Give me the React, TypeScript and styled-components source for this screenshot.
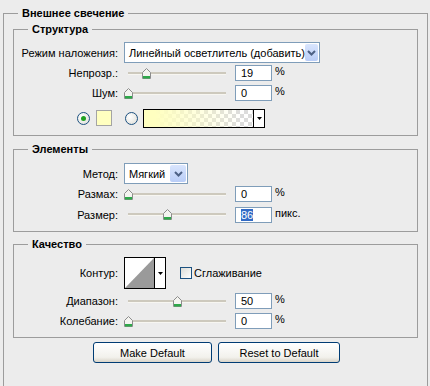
import styled, { createGlobalStyle } from 'styled-components';

const GlobalStyle = createGlobalStyle`
  body {
    margin: 0;
    background: #ececec;
    font-family: "Liberation Sans", Arial, sans-serif;
    font-size: 11px;
    color: #000;
  }
`;

const Page = styled.div`
  height: 386px;
  box-sizing: border-box;
  overflow: hidden;
  padding: 6px 2px 0 3px;
`;

const Group = styled.fieldset<{ $mt?: number }>`
  margin: ${p => p.$mt ?? 0}px 0 0;
  padding: 0;
  border: 1px solid #9c9c9c;
  min-width: 0;
`;

const Legend = styled.legend`
  margin-left: 14px;
  padding: 0 4px;
  font-weight: bold;
  line-height: 14px;
  height: 14px;
`;

const Body = styled.div<{ $pt: number; $pb: number; $px?: number }>`
  padding: ${p => p.$pt}px ${p => p.$px ?? 0}px ${p => p.$pb}px;
`;

const Row = styled.div<{ $h: number; $mt?: number }>`
  display: grid;
  grid-template-columns: 104px 1fr;
  column-gap: 6px;
  align-items: center;
  height: ${p => p.$h}px;
  margin-top: ${p => p.$mt ?? 0}px;
`;

const Label = styled.div`
  text-align: right;
  white-space: nowrap;
`;

const Controls = styled.div`
  display: flex;
  align-items: center;
`;

const Select = styled.div<{ $w: number }>`
  width: ${p => p.$w}px;
  height: 21px;
  box-sizing: border-box;
  border: 1px solid #7f9db9;
  background: #fff;
  display: flex;
  align-items: center;
  justify-content: space-between;
  padding-left: 4px;
  white-space: nowrap;
`;

const SelectButton = styled.div`
  width: 16px;
  height: 17px;
  margin-right: 1px;
  border-radius: 2px;
  background: linear-gradient(#d9e5fd, #b9cdf7);
  display: flex;
  align-items: center;
  justify-content: center;
`;

const Slider = styled.div`
  position: relative;
  width: 105px;
  height: 11px;
  display: flex;
  align-items: center;
`;

const Track = styled.div`
  margin-left: 4px;
  width: 98px;
  height: 2px;
  background: #cdc9bd;
  border-bottom: 1px solid #f7f6f1;
`;

const Thumb = styled.svg`
  position: absolute;
  top: 0;
`;

const Numeric = styled.div`
  width: 37px;
  height: 16px;
  box-sizing: border-box;
  border: 1px solid #7f9db9;
  background: #fff;
  padding-left: 5px;
  line-height: 14px;
  margin-left: 6px;
`;

const Selected = styled.span`
  background: #316ac5;
  color: #fff;
`;

const Unit = styled.span`
  margin-left: 3px;
  align-self: flex-start;
  line-height: 12px;
`;

const ColorRow = styled.div`
  display: flex;
  align-items: center;
  height: 20px;
  margin-top: 5px;
  padding-left: 63px;
`;

const Radio = styled.div<{ $on?: boolean }>`
  width: 13px;
  height: 13px;
  box-sizing: border-box;
  border-radius: 50%;
  border: 1px solid #1c5180;
  background: radial-gradient(circle at 35% 35%, #fff, #dcdcd5);
  display: flex;
  align-items: center;
  justify-content: center;
  margin-right: ${p => (p.$on ? 6 : 5)}px;
  &::after {
    content: '';
    display: ${p => (p.$on ? 'block' : 'none')};
    width: 5px;
    height: 5px;
    border-radius: 50%;
    background: #21a121;
  }
`;

const Swatch = styled.div`
  width: 16px;
  height: 16px;
  box-sizing: border-box;
  border: 1px solid #a4a4a4;
  background: #ffffc0;
  margin-right: 13px;
`;

const GradientBox = styled.div`
  width: 122px;
  height: 19px;
  box-sizing: border-box;
  border: 1px solid #000;
  display: flex;
`;

const GradientFill = styled.div`
  flex: 1;
  background:
    linear-gradient(to right, #ffffc0 10%, rgba(255, 255, 192, 0) 90%),
    repeating-conic-gradient(#dcdcdc 0 25%, #fff 0 50%) 0 0 / 8px 8px;
`;

const ArrowPart = styled.div`
  width: 10px;
  border-left: 1px solid #000;
  background: #fff;
  display: flex;
  align-items: center;
  justify-content: center;
`;

const Contour = styled.div`
  width: 42px;
  height: 32px;
  box-sizing: border-box;
  border: 1px solid #000;
  display: flex;
  background: #fff;
  margin-right: 14px;
`;

const ContourGraph = styled.svg`
  flex: 1;
  display: block;
`;

const Checkbox = styled.div`
  width: 12px;
  height: 12px;
  box-sizing: border-box;
  border: 1px solid #1c5180;
  background: linear-gradient(135deg, #dcdcd7, #fff);
  margin-right: 2px;
`;

const Buttons = styled.div`
  display: flex;
  justify-content: center;
  gap: 6px;
  margin-top: 4px;
  padding-left: 2px;
`;

const Button = styled.button<{ $w: number }>`
  width: ${p => p.$w}px;
  height: 21px;
  padding: 0;
  border: 1px solid #003c74;
  border-radius: 3px;
  background: linear-gradient(#ffffff, #f2f1ec 75%, #d9d4c8);
  font-family: "Liberation Sans", Arial, sans-serif;
  font-size: 11px;
  color: #000;
`;

const Chevron = () => (
  <svg width="9" height="6" viewBox="0 0 9 6">
    <polyline points="1,1 4.5,4.5 8,1" fill="none" stroke="#4d6185" strokeWidth="2" />
  </svg>
);

const SmallArrow = () => (
  <svg width="5" height="3" viewBox="0 0 5 3">
    <polygon points="0,0 5,0 2.5,3" fill="#000" />
  </svg>
);

const SliderField = ({ pct }: { pct: number }) => (
  <Slider>
    <Track />
    <Thumb width="9" height="11" viewBox="0 0 9 11" style={{ left: 4 + pct * 98 - 4.5 }}>
      <path d="M0.5 10.5 V4.5 L4.5 0.5 L8.5 4.5 V10.5 Z" fill="#f4f4f0" stroke="#8c8c8c" />
      <rect x="1" y="8" width="7" height="2.5" fill="#2ea84a" />
    </Thumb>
  </Slider>
);

const SliderRow = ({
  label,
  pct,
  value,
  unit = '%',
  selected,
  h = 20,
  mt,
}: {
  label: string;
  pct: number;
  value: string;
  unit?: string;
  selected?: boolean;
  h?: number;
  mt?: number;
}) => (
  <Row $h={h} $mt={mt}>
    <Label>{label}</Label>
    <Controls>
      <SliderField pct={pct} />
      <Numeric>{selected ? <Selected>{value}</Selected> : value}</Numeric>
      <Unit>{unit}</Unit>
    </Controls>
  </Row>
);

export default function App() {
  return (
    <Page>
      <GlobalStyle />
      <Group>
        <Legend>Внешнее свечение</Legend>
        <Body $pt={2} $pb={40} $px={9}>
          <Group>
            <Legend>Структура</Legend>
            <Body $pt={6} $pb={7}>
              <Row $h={21}>
                <Label>Режим наложения:</Label>
                <Controls>
                  <Select $w={196}>
                    Линейный осветлитель (добавить)
                    <SelectButton>
                      <Chevron />
                    </SelectButton>
                  </Select>
                </Controls>
              </Row>
              <SliderRow label="Непрозр.:" pct={0.19} value="19" />
              <SliderRow label="Шум:" pct={0} value="0" />
              <ColorRow>
                <Radio $on />
                <Swatch />
                <Radio />
                <GradientBox>
                  <GradientFill />
                  <ArrowPart>
                    <SmallArrow />
                  </ArrowPart>
                </GradientBox>
              </ColorRow>
            </Body>
          </Group>

          <Group $mt={6}>
            <Legend>Элементы</Legend>
            <Body $pt={7} $pb={6}>
              <Row $h={21}>
                <Label>Метод:</Label>
                <Controls>
                  <Select $w={64}>
                    Мягкий
                    <SelectButton>
                      <Chevron />
                    </SelectButton>
                  </Select>
                </Controls>
              </Row>
              <SliderRow label="Размах:" pct={0} value="0" />
              <SliderRow label="Размер:" pct={0.4} value="86" unit="пикс." selected h={21} />
            </Body>
          </Group>

          <Group $mt={5}>
            <Legend>Качество</Legend>
            <Body $pt={6} $pb={6}>
              <Row $h={32}>
                <Label>Контур:</Label>
                <Controls>
                  <Contour>
                    <ContourGraph viewBox="0 0 30 30" preserveAspectRatio="none">
                      <polygon points="0,30 30,0 30,30" fill="#9a9a9a" />
                    </ContourGraph>
                    <ArrowPart>
                      <SmallArrow />
                    </ArrowPart>
                  </Contour>
                  <Checkbox />
                  Сглаживание
                </Controls>
              </Row>
              <SliderRow label="Диапазон:" pct={0.5} value="50" mt={2} />
              <SliderRow label="Колебание:" pct={0} value="0" />
            </Body>
          </Group>

          <Buttons>
            <Button $w={119}>Make Default</Button>
            <Button $w={122}>Reset to Default</Button>
          </Buttons>
        </Body>
      </Group>
    </Page>
  );
}
